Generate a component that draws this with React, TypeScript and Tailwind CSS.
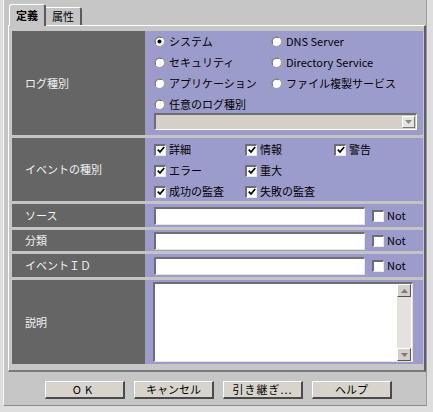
import React from 'react';

const FONT = { fontFamily: '"Noto Sans CJK JP", "Noto Sans", sans-serif' };

function Radio({ checked, label }: { checked?: boolean; label: string }) {
  return (
    <div className="flex items-center h-[21px] gap-[4px]">
      <svg width="11" height="11" viewBox="0 0 11 11" className="shrink-0">
        <circle cx="5.5" cy="5.5" r="5" fill="#ffffff" stroke="#9a9a9a" strokeWidth="1" />
        <path d="M1.6 7.8 A4.6 4.6 0 0 1 7.8 1.6" stroke="#5e5e5e" strokeWidth="1" fill="none" />
        {checked && <circle cx="5.5" cy="5.5" r="2" fill="#000000" />}
      </svg>
      <span className="text-[11px] text-black whitespace-nowrap">{label}</span>
    </div>
  );
}

function Check({ checked, label }: { checked?: boolean; label?: string }) {
  return (
    <div className="flex items-center h-[21px] gap-[3px]">
      <div className="w-[12px] h-[12px] shrink-0 bg-white border-t-2 border-l-2 border-t-[#6e6e6e] border-l-[#6e6e6e] border-b border-r border-b-[#e8e8e8] border-r-[#e8e8e8] flex items-center justify-center">
        {checked && (
          <svg width="8" height="8" viewBox="0 0 8 8">
            <path d="M0.8 3.6 L3 6 L7.2 1" stroke="#000" strokeWidth="1.8" fill="none" />
          </svg>
        )}
      </div>
      {label && <span className="text-[11px] text-black whitespace-nowrap">{label}</span>}
    </div>
  );
}

function Label({ text }: { text: string }) {
  return (
    <div className="w-[133px] shrink-0 bg-[#656565] flex items-center pl-[13px] text-[11px] text-[#f2f2f2]">
      {text}
    </div>
  );
}

function TextRow({ label, h }: { label: string; h: string }) {
  return (
    <div className={`flex ${h}`}>
      <Label text={label} />
      <div className="flex-1 bg-[#9c9ccc] flex items-center pl-[9px]">
        <div className="w-[211px] h-[18px] bg-white border-t-2 border-l-2 border-t-[#707070] border-l-[#707070] border-b border-r border-b-[#e4e4e4] border-r-[#e4e4e4]" />
        <div className="ml-[7px] flex items-center">
          <Check label="Not" />
        </div>
      </div>
    </div>
  );
}

function ScrollBtn({ up }: { up?: boolean }) {
  return (
    <div className="w-[14px] h-[13px] bg-[#d4d0c8] border-t border-l border-t-white border-l-white border-b border-r border-b-[#555] border-r-[#555] flex items-center justify-center">
      <svg width="7" height="4" viewBox="0 0 7 4">
        {up ? <path d="M0 4 L3.5 0 L7 4 Z" fill="#7a7a7a" /> : <path d="M0 0 L3.5 4 L7 0 Z" fill="#7a7a7a" />}
      </svg>
    </div>
  );
}

function Button({ children }: { children: React.ReactNode }) {
  return (
    <div className="w-[80px] h-[18px] bg-[#d8d4cc] border-t border-l border-t-white border-l-white border-b-2 border-r-2 border-b-[#4a4a4a] border-r-[#4a4a4a] flex items-center justify-center text-[11px] text-black">
      {children}
    </div>
  );
}

export default function App() {
  return (
    <div className="w-[433px] h-[412px] bg-[#dedede] overflow-hidden" style={FONT}>
      <div className="ml-[3px] w-[424px] h-[406px] bg-[#c6c6c6] border-l border-l-[#f4f4f4] border-r border-r-[#9a9a9a] border-b border-b-[#8a8a8a] pl-[4px] pt-[4px]">
        {/* tabs */}
        <div className="flex items-end h-[21px] pl-[1px]">
          <div className="relative z-10 w-[37px] h-[22px] -mb-px bg-[#c6c6c6] border-t border-l border-t-white border-l-white border-r-2 border-r-[#5a5a5a] rounded-t-[3px] flex items-center justify-center text-[11px] font-bold text-black">
            定義
          </div>
          <div className="w-[36px] h-[18px] bg-[#c6c6c6] border-t border-t-white border-r-2 border-r-[#5a5a5a] rounded-tr-[3px] flex items-center justify-center text-[11px] text-black">
            属性
          </div>
        </div>

        {/* panel */}
        <div className="w-[418px] border-t border-l border-t-white border-l-white border-r-2 border-b-2 border-r-[#5e5e5e] border-b-[#7a7a7a] pt-[5px] pl-[3px] pr-[1px] pb-[6px]">
          <div className="flex flex-col gap-[3px] bg-[#c4c4c4]">
            {/* ログ種別 */}
            <div className="flex h-[104px]">
              <Label text="ログ種別" />
              <div className="flex-1 bg-[#9c9ccc] pl-[9px] pt-[-1px]">
                <div className="grid grid-cols-[117px_1fr]">
                  <Radio checked label="システム" />
                  <Radio label="DNS Server" />
                  <Radio label="セキュリティ" />
                  <Radio label="Directory Service" />
                  <Radio label="アプリケーション" />
                  <Radio label="ファイル複製サービス" />
                  <Radio label="任意のログ種別" />
                </div>
                <div className="mt-[-2px] w-[263px] h-[17px] bg-[#d4d0c8] border-t-2 border-l-2 border-t-[#6e6e6e] border-l-[#6e6e6e] border-b border-r border-b-white border-r-white flex justify-end items-center pr-[1px]">
                  <div className="w-[13px] h-[12px] bg-[#e6e4de] border-t border-l border-t-white border-l-white border-b border-r border-b-[#777] border-r-[#777] flex items-center justify-center">
                    <svg width="7" height="4" viewBox="0 0 7 4">
                      <path d="M0 0 L3.5 4 L7 0 Z" fill="#8a8a8a" />
                    </svg>
                  </div>
                </div>
              </div>
            </div>

            {/* イベントの種別 */}
            <div className="flex h-[63px]">
              <Label text="イベントの種別" />
              <div className="flex-1 bg-[#9c9ccc] pl-[9px] pt-[1px]">
                <div className="grid grid-cols-[91px_89px_1fr]">
                  <Check checked label="詳細" />
                  <Check checked label="情報" />
                  <Check checked label="警告" />
                  <Check checked label="エラー" />
                  <Check checked label="重大" />
                  <div />
                  <Check checked label="成功の監査" />
                  <Check checked label="失敗の監査" />
                </div>
              </div>
            </div>

            <TextRow label="ソース" h="h-[23px]" />
            <TextRow label="分類" h="h-[21px]" />
            <TextRow label="イベントＩＤ" h="h-[23px]" />

            {/* 説明 */}
            <div className="flex h-[84px]">
              <Label text="説明" />
              <div className="flex-1 bg-[#9c9ccc] pl-[8px] pt-[2px]">
                <div className="w-[260px] h-[80px] bg-white border-t-2 border-l-2 border-t-[#6e6e6e] border-l-[#6e6e6e] border-b border-r border-b-[#e4e4e4] border-r-[#e4e4e4] flex justify-end">
                  <div className="w-[14px] h-full bg-[#e4e2dc] flex flex-col justify-between mr-[1px]">
                    <ScrollBtn up />
                    <ScrollBtn />
                  </div>
                </div>
              </div>
            </div>
          </div>
        </div>

        {/* buttons */}
        <div className="flex gap-[9px] pl-[37px] mt-[9px]">
          <Button>
            <span className="tracking-[4px]">OK</span>
          </Button>
          <Button>キャンセル</Button>
          <Button>
            <span className="tracking-[1px]">引き継ぎ...</span>
          </Button>
          <Button>ヘルプ</Button>
        </div>
      </div>
    </div>
  );
}
